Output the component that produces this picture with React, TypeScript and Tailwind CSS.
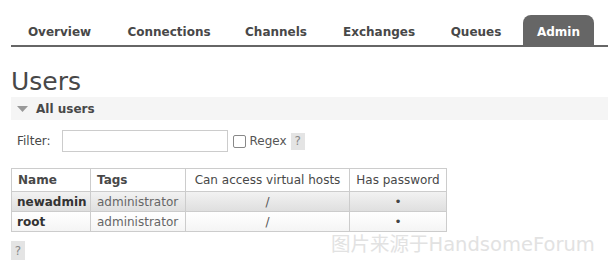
import React from "react";

const tabs: [string, number][] = [
  ["Overview", 97],
  ["Connections", 122],
  ["Channels", 92],
  ["Exchanges", 114],
  ["Queues", 80],
];

export default function App() {
  return (
    <div className="w-[608px] h-[267px] bg-white overflow-hidden relative text-[#484848]" style={{ fontFamily: '"DejaVu Sans", Verdana, sans-serif' }}>
      <div className="pt-[15px] pl-[11px]">
        <div className="flex items-end h-[32px] border-b-2 border-[#666] text-[12px] font-bold">
          {tabs.map(([t, w]) => (
            <div key={t} style={{ width: w }} className="h-full flex items-center justify-center pt-[3px]">
              {t}
            </div>
          ))}
          <div className="ml-[7px] h-full w-[71px] bg-[#666] text-white rounded-t-[8px] flex items-center justify-center pt-[3px]">
            Admin
          </div>
        </div>
      </div>
      <div className="pl-[11px]">
        <h1 className="mt-[21px] text-[25px] leading-[28px] text-[#484848] font-normal">Users</h1>
        <div className="mt-[1px] h-[23px] bg-[#f5f5f5] flex items-center pl-[6px] text-[12px] font-bold">
          <svg width="11" height="6" viewBox="0 0 11 6" className="mr-[8px]">
            <polygon points="0,0 11,0 5.5,6" fill="#999" />
          </svg>
          All users
        </div>
        <div className="mt-[10px] flex items-center text-[12px] pl-[6px]">
          <span className="text-[#484848]">Filter:</span>
          <input className="ml-[11px] w-[166px] h-[22px] border border-[#ccc] bg-white" />
          <span className="ml-[5px] w-[13px] h-[13px] border border-[#888] rounded-[2px] bg-white" />
          <span className="ml-[4px] text-[#555]">Regex</span>
          <span className="ml-[4px] w-[14px] h-[17px] bg-[#e4e4e4] text-[#888] flex items-center justify-center">?</span>
        </div>
        <table className="mt-[16px] border-collapse text-[12px] table-fixed w-[435px]">
          <colgroup>
            <col className="w-[79px]" />
            <col className="w-[95px]" />
            <col className="w-[164px]" />
            <col className="w-[97px]" />
          </colgroup>
          <thead>
            <tr className="h-[23px]">
              <th className="border border-[#ccc] px-[6px] text-left font-bold whitespace-nowrap">Name</th>
              <th className="border border-[#ccc] px-[6px] text-left font-bold whitespace-nowrap">Tags</th>
              <th className="border border-[#ccc] px-[4px] font-normal whitespace-nowrap">Can access virtual hosts</th>
              <th className="border border-[#ccc] px-[4px] font-normal whitespace-nowrap">Has password</th>
            </tr>
          </thead>
          <tbody>
            <tr className="h-[20px] bg-gradient-to-b from-[#f2f2f2] to-[#dedede]">
              <td className="border border-[#ccc] px-[5px] font-bold text-[#333] whitespace-nowrap">newadmin</td>
              <td className="border border-[#ccc] px-[6px] text-[#666] whitespace-nowrap">administrator</td>
              <td className="border border-[#ccc] px-[6px] text-center text-[#555]">/</td>
              <td className="border border-[#ccc] px-[6px] text-center text-[#444]">•</td>
            </tr>
            <tr className="h-[20px] bg-gradient-to-b from-[#ffffff] to-[#f4f4f4]">
              <td className="border border-[#ccc] px-[5px] font-bold text-[#333] whitespace-nowrap">root</td>
              <td className="border border-[#ccc] px-[6px] text-[#666] whitespace-nowrap">administrator</td>
              <td className="border border-[#ccc] px-[6px] text-center text-[#555]">/</td>
              <td className="border border-[#ccc] px-[6px] text-center text-[#444]">•</td>
            </tr>
          </tbody>
        </table>
        <div className="mt-[9px] w-[14px] h-[19px] bg-[#e4e4e4] text-[#888] text-[12px] flex items-center justify-center">?</div>
      </div>
      <div className="absolute left-[331px] top-[232px] text-[19.5px] leading-[26px] text-[#e2e2e2] whitespace-nowrap" style={{ fontFamily: '"DejaVu Sans", "Noto Sans CJK SC", sans-serif' }}>
        图片来源于HandsomeForum
      </div>
    </div>
  );
}
